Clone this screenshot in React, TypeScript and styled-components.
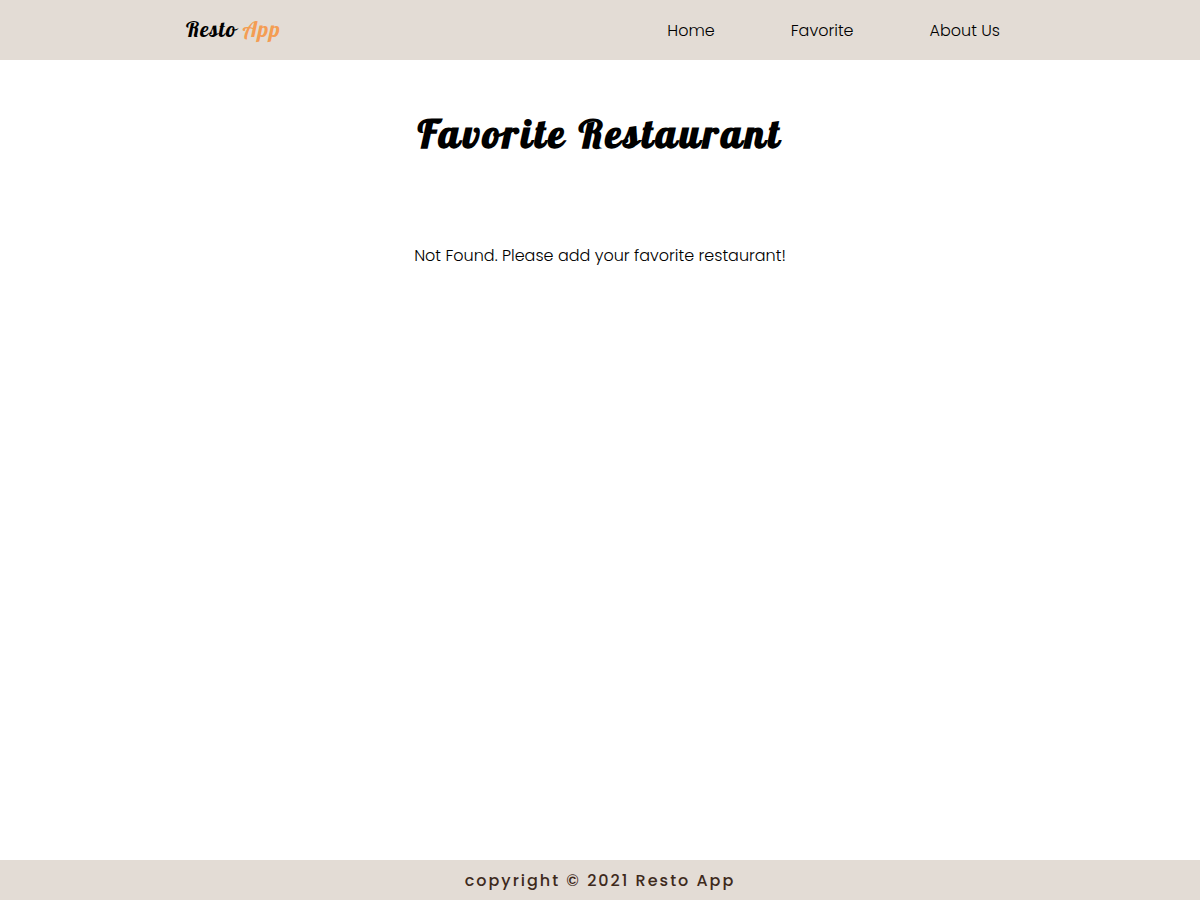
import React from 'react';
import styled, { createGlobalStyle } from 'styled-components';

const GlobalStyle = createGlobalStyle`
  * {
    box-sizing: border-box;
    margin: 0;
    padding: 0;
  }

  body {
    background: #ffffff;
    color: #000000;
    font-family: Poppins, Inter, sans-serif;
    font-size: 16px;
    font-weight: 300;
    line-height: 24px;
  }
`;

const Page = styled.div`
  display: flex;
  flex-direction: column;
  min-height: 100vh;
`;

const Header = styled.header`
  display: flex;
  align-items: center;
  justify-content: space-between;
  min-height: 60px;
  padding: 0 200px 0 186px;
  background: #e3dcd5;

  @media (max-width: 900px) {
    padding: 0 24px;
  }
`;

const Logo = styled.a`
  padding-bottom: 2px;
  color: #000000;
  font-family: Lobster, 'Liberation Serif', serif;
  font-size: 22px;
  font-weight: 400;
  letter-spacing: 1px;
  line-height: 28px;
  text-decoration: none;
`;

const LogoAccent = styled.span`
  color: #f49d53;
`;

const NavList = styled.ul`
  display: flex;
  flex-wrap: wrap;
  gap: 4px 76px;
  padding-top: 2px;
  list-style: none;

  @media (max-width: 900px) {
    column-gap: 24px;
  }
`;

const NavLink = styled.a`
  color: #000000;
  text-decoration: none;
`;

const Main = styled.main`
  display: flex;
  flex: 1;
  flex-direction: column;
  align-items: center;
  gap: 80px;
  padding: 44px 24px;
  text-align: center;
`;

const Title = styled.h1`
  padding-bottom: 2px;
  font-family: Lobster, 'Liberation Serif', serif;
  font-size: 40px;
  font-weight: 700;
  letter-spacing: 3px;
  line-height: 58px;
`;

const Message = styled.p`
  line-height: 24px;
`;

const Footer = styled.footer`
  padding: 9px 24px 7px;
  background: #e3dcd5;
  color: #3e2a1c;
  font-weight: 500;
  letter-spacing: 2px;
  text-align: center;
`;

const links = [
  { label: 'Home', href: '#/home' },
  { label: 'Favorite', href: '#/favorite' },
  { label: 'About Us', href: '#/about' },
];

export default function App() {
  return (
    <>
      <GlobalStyle />
      <Page>
        <Header>
          <Logo href="#/home">
            Resto <LogoAccent>App</LogoAccent>
          </Logo>
          <nav aria-label="Main">
            <NavList>
              {links.map((link) => (
                <li key={link.label}>
                  <NavLink href={link.href}>{link.label}</NavLink>
                </li>
              ))}
            </NavList>
          </nav>
        </Header>
        <Main>
          <Title>Favorite Restaurant</Title>
          <Message>Not Found. Please add your favorite restaurant!</Message>
        </Main>
        <Footer>copyright © 2021 Resto App</Footer>
      </Page>
    </>
  );
}
